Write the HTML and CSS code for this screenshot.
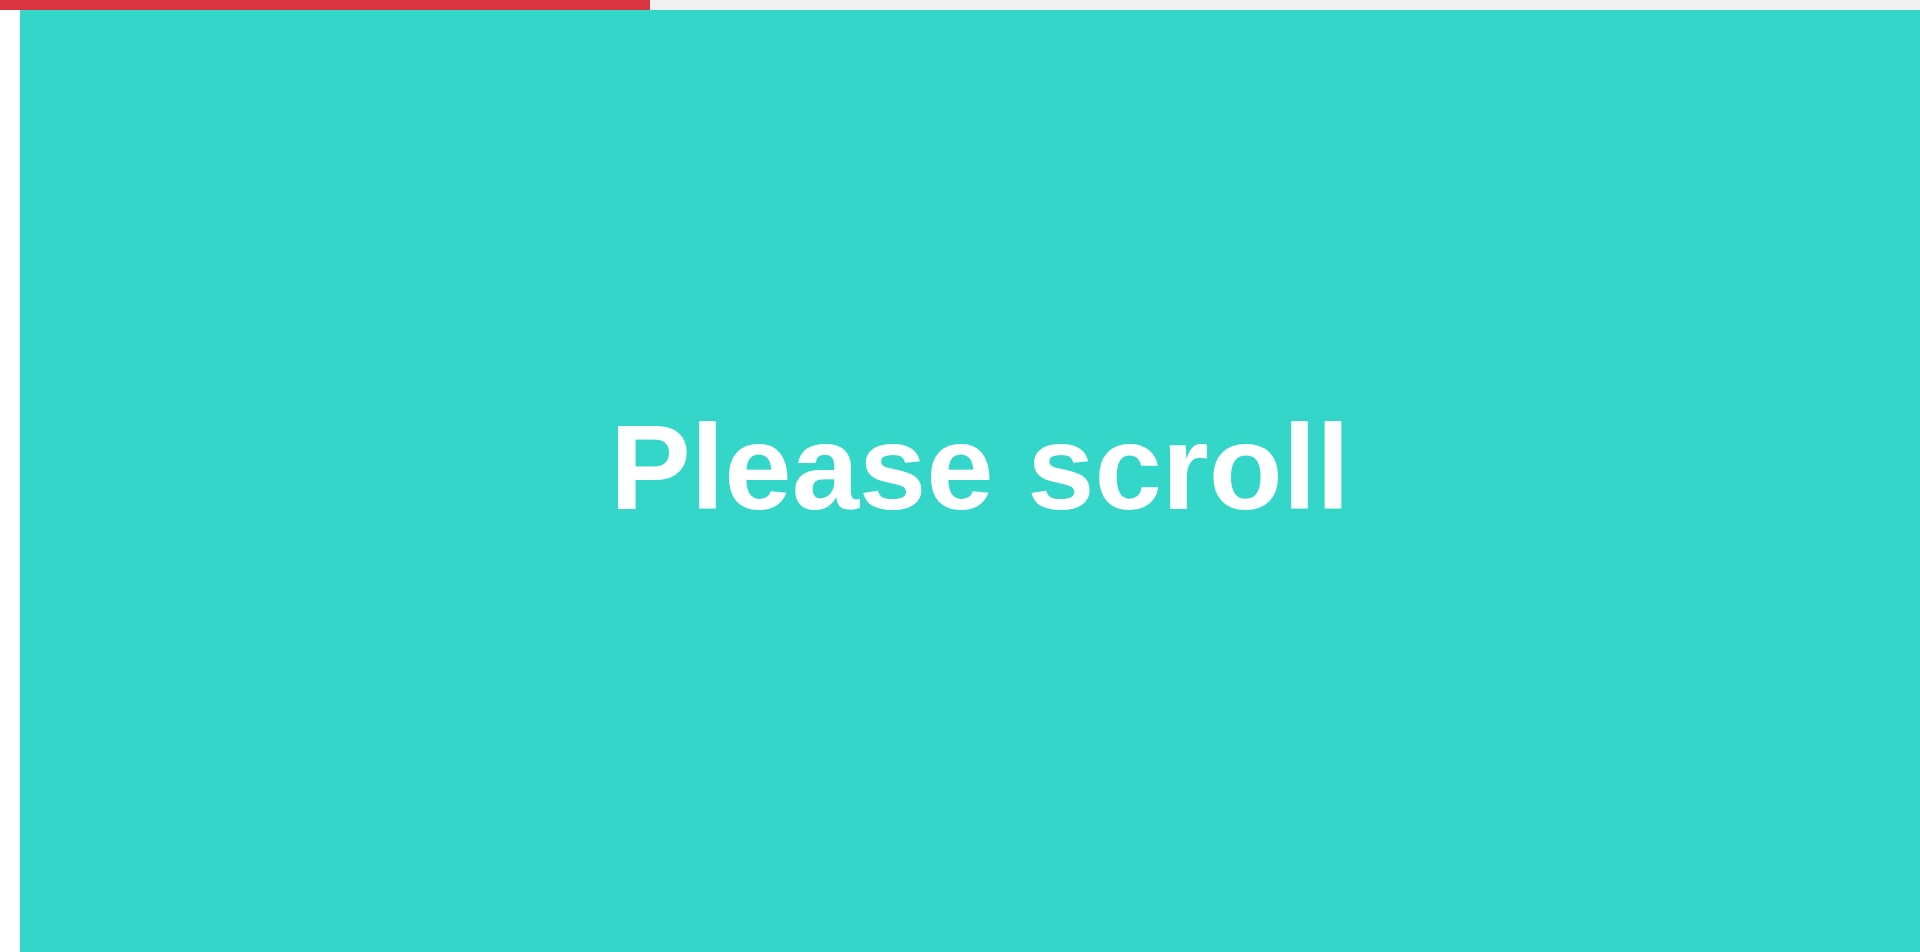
FILE: index.html
```html
<!DOCTYPE html>
<html lang="en">
<head>
<meta charset="utf-8">
<title>Please scroll</title>
<link rel="stylesheet" href="styles.css">
</head>
<body>
<div class="progress"><div class="progress-fill" style="width: 650px"></div></div>
<main class="page">
  <section class="panel">
    <h1 class="title">Please scroll</h1>
  </section>
</main>
</body>
</html>
```
FILE: styles.css
```css
html, body {
  margin: 0;
  padding: 0;
  overflow: hidden;
  background: #ffffff;
  font-family: "Liberation Sans", Arial, sans-serif;
}
.progress {
  height: 10px;
  background: #f0f0f0;
}
.progress-fill {
  height: 100%;
  background: #d9343f;
}
.page {
  padding-left: 20px;
}
.panel {
  height: 942px;
  background: #33d6c8;
  box-sizing: border-box;
  padding-top: 387px;
  padding-left: 20px;
  display: flex;
  justify-content: center;
  align-items: flex-start;
}
.title {
  margin: 0;
  color: #ffffff;
  font-size: 121px;
  font-weight: 700;
  line-height: normal;
}
```
